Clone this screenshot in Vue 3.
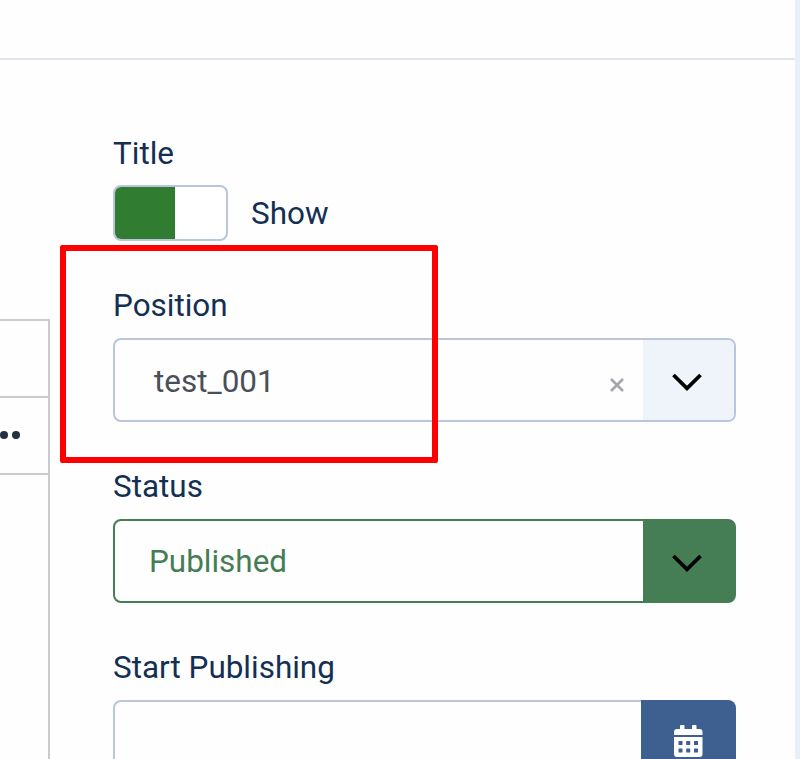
<script setup>
const tableRows = [{ dots: false }, { dots: true }, { dots: false }]
const calendarDots = [
  [5, 18], [12.7, 18], [20.5, 18],
  [5, 25.5], [12.7, 25.5], [20.5, 25.5],
]
</script>

<template>
  <div class="page">
    <main class="panel">
      <header class="topbar"></header>
      <div class="content">
        <aside class="table">
          <div v-for="(row, i) in tableRows" :key="i" class="row">
            <template v-if="row.dots"><i class="dot"></i><i class="dot"></i></template>
          </div>
        </aside>
        <form class="form">
          <div class="group group-title">
            <label class="label">Title</label>
            <div class="switch-row">
              <span class="switch"><span class="switch-on"></span></span>
              <span class="switch-text">Show</span>
            </div>
          </div>
          <div class="group">
            <label class="label">Position</label>
            <div class="field">
              <span class="value chosen">test_001</span>
              <svg class="clear" width="16" height="16" viewBox="0 0 16 16"><path d="M2 2 14 14M14 2 2 14" /></svg>
              <span class="toggle">
                <svg class="chevron" width="30" height="18" viewBox="0 0 30 18"><path d="M1.500 2 15 15.300 28.500 2" /></svg>
              </span>
            </div>
          </div>
          <div class="group">
            <label class="label">Status</label>
            <div class="field success">
              <span class="value">Published</span>
              <span class="toggle">
                <svg class="chevron" width="30" height="18" viewBox="0 0 30 18"><path d="M1.500 2 15 15.300 28.500 2" /></svg>
              </span>
            </div>
          </div>
          <div class="group">
            <label class="label">Start Publishing</label>
            <div class="field date">
              <span class="value"></span>
              <span class="toggle">
                <svg class="calendar" width="29" height="33" viewBox="0 0 29 33">
                  <path fill="#fff" d="M0 10V7Q0 4 3 4H6V1Q6 0 7 0H9.500Q10.500 0 10.500 1V4H18V1Q18 0 19 0H21.500Q22.500 0 22.500 1V4H25.500Q28.500 4 28.500 7V10ZM0 12H28.500V29Q28.500 32 25.500 32H3Q0 32 0 29Z" />
                  <rect v-for="([x, y], i) in calendarDots" :key="i" :x="x - 0.5" :y="y - 2" width="4" height="4" rx="0.5" fill="#3d6090" />
                </svg>
              </span>
            </div>
          </div>
        </form>
      </div>
    </main>
    <div class="highlight"></div>
  </div>
</template>

<style>
body {
  background: #e9eff6;
  overflow: hidden;
}
</style>

<style scoped>
.page {
  position: relative;
  width: 800px;
  height: 759px;
  overflow: hidden;
  background: #e9eff6;
  font-family: Roboto, sans-serif;
  font-size: 31.45px;
  color: #132f53;
}
.panel {
  width: 795px;
  height: 759px;
  background: #fefefe;
  overflow: hidden;
}
.topbar {
  height: 60px;
  box-sizing: border-box;
  border-bottom: 2px solid #e1e5ee;
}
.content {
  display: flex;
  gap: 63px;
}
.table {
  width: 50px;
  height: 500px;
  margin-top: 259px;
  box-sizing: border-box;
  border-right: 2px solid #cbcbcb;
}
.row {
  display: flex;
  align-items: center;
  gap: 4px;
  height: 77px;
  box-sizing: border-box;
  border-top: 2px solid #cbcbcb;
  padding-bottom: 2px;
}
.dot {
  width: 8px;
  height: 8px;
  border-radius: 50%;
  background: #22303f;
}
.form {
  width: 623px;
  flex: none;
  padding-top: 75px;
}
.group {
  height: 181px;
}
.group-title {
  height: 153px;
}
.label {
  display: block;
  height: 50px;
  line-height: 36px;
  white-space: nowrap;
}
.group-title .label {
  line-height: 38px;
}
.switch-row {
  display: flex;
  align-items: center;
  gap: 23px;
}
.switch {
  display: flex;
  width: 115px;
  height: 56px;
  box-sizing: border-box;
  border: 2px solid #b8c5dc;
  border-radius: 8px;
  overflow: hidden;
  background: #fff;
}
.switch-on {
  width: 60px;
  background: #307d32;
}
.switch-text {
  line-height: 36px;
  padding-top: 2px;
}
.field {
  display: flex;
  align-items: center;
  height: 84px;
  box-sizing: border-box;
  border: 2px solid #b9c6de;
  border-radius: 8px;
  overflow: hidden;
  background: #fefefe;
}
.value {
  flex: 1;
  padding-top: 2px;
  padding-left: 34px;
  line-height: 36px;
}
.chosen {
  padding-left: 39px;
  padding-top: 4px;
  color: #495057;
}
.clear {
  margin: 9px 18px 0 0;
  fill: none;
  stroke: #a3a6aa;
  stroke-width: 2.6;
}
.toggle {
  display: flex;
  justify-content: center;
  align-items: center;
  width: 91px;
  height: 100%;
  padding-right: 3px;
  box-sizing: border-box;
  background: #eff4fb;
}
.chevron {
  margin-top: 4px;
  fill: none;
  stroke: #000;
  stroke-width: 3.8;
}
.success {
  border-color: #457d54;
  color: #457d54;
  background: linear-gradient(to right, #fefefe 528px, #457d54 528px);
}
.success .toggle {
  background: none;
}
.date {
  border-color: transparent;
  background:
    linear-gradient(to right, #fefefe 526px, #3d6090 526px) padding-box,
    linear-gradient(to right, #b9c6de 528px, #3d6090 528px) border-box;
}
.date .toggle {
  width: 93px;
  padding-left: 2px;
  padding-right: 0;
  background: none;
}
.calendar {
  margin-top: -1px;
}
.highlight {
  position: absolute;
  left: 60px;
  top: 245px;
  width: 378px;
  height: 218px;
  box-sizing: border-box;
  border: 6px solid #fe0000;
  border-radius: 2px;
}
</style>
